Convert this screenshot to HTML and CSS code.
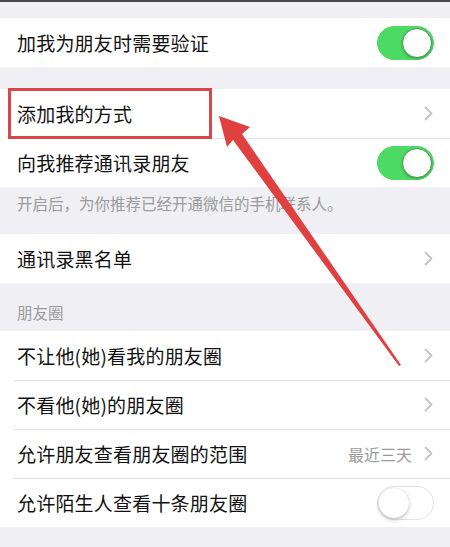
FILE: index.html
```html
<!DOCTYPE html>
<html lang="zh-CN">
<head>
    <meta charset="UTF-8">
    <meta name="viewport" content="width=device-width, initial-scale=1.0">
    <title>隐私</title>
    <link rel="stylesheet" href="styles.css">
</head>
<body>
    <div class="page">
        <div class="topline"></div>
        <div class="gap-top"></div>

        <div class="group">
            <div class="row">
                <span class="label">加我为朋友时需要验证</span>
                <span class="switch on"><span class="knob"></span></span>
            </div>
        </div>

        <div class="gap-mid"></div>

        <div class="group">
            <div class="row">
                <span class="label">添加我的方式</span>
                <svg class="chevron" viewBox="0 0 9 15"><polyline points="1.5,1.5 7.5,7.5 1.5,13.5"/></svg>
            </div>
            <div class="row">
                <span class="label">向我推荐通讯录朋友</span>
                <span class="switch on"><span class="knob"></span></span>
            </div>
        </div>

        <div class="footer-note">开启后，为你推荐已经开通微信的手机联系人。</div>

        <div class="group">
            <div class="row">
                <span class="label">通讯录黑名单</span>
                <svg class="chevron" viewBox="0 0 9 15"><polyline points="1.5,1.5 7.5,7.5 1.5,13.5"/></svg>
            </div>
        </div>

        <div class="section-title">朋友圈</div>

        <div class="group">
            <div class="row">
                <span class="label">不让他(她)看我的朋友圈</span>
                <svg class="chevron" viewBox="0 0 9 15"><polyline points="1.5,1.5 7.5,7.5 1.5,13.5"/></svg>
            </div>
            <div class="row">
                <span class="label">不看他(她)的朋友圈</span>
                <svg class="chevron" viewBox="0 0 9 15"><polyline points="1.5,1.5 7.5,7.5 1.5,13.5"/></svg>
            </div>
            <div class="row">
                <span class="label">允许朋友查看朋友圈的范围</span>
                <span class="value">最近三天</span>
                <svg class="chevron" viewBox="0 0 9 15"><polyline points="1.5,1.5 7.5,7.5 1.5,13.5"/></svg>
            </div>
            <div class="row">
                <span class="label">允许陌生人查看十条朋友圈</span>
                <span class="switch"><span class="knob"></span></span>
            </div>
        </div>

        <!-- annotation drawn over the screenshot -->
        <svg class="annotation" viewBox="0 0 450 547">
            <rect class="mark-box" x="9.5" y="89.5" width="201" height="48"/>
            <polygon class="mark-arrow" points="219,116 250,127 242,134 401,365 399,366 233,140 227,147"/>
        </svg>
    </div>
</body>
</html>
```

FILE: styles.css
```css
:root {
    --bg: #efeff4;
    --text: #111;
    --muted: #9b9b9b;
    --line: #e2e2e6;
    --green: #4cd964;
    --red: #e0403f;
}

body {
    margin: 0;
    background-color: var(--bg);
    font-family: "Noto Sans CJK SC", "Noto Sans", sans-serif;
    color: var(--text);
}

.page {
    position: relative;
    width: 450px;
    height: 547px;
    overflow: hidden;
}

.topline {
    height: 2px;
    background: #4a4a4a;
}

.gap-top {
    height: 16px;
}

.gap-mid {
    height: 22px;
}

.group {
    background: white;
}

.row {
    display: flex;
    align-items: center;
    height: 49px;
    box-sizing: border-box;
    padding: 0 16px 0 17px;
    position: relative;
}

.row + .row::before {
    content: "";
    position: absolute;
    top: 0;
    left: 14px;
    right: 0;
    height: 1px;
    background: var(--line);
}

.label {
    flex: 1;
    font-size: 19px;
    line-height: 1;
    letter-spacing: 0.2px;
}

.value {
    font-size: 16px;
    color: var(--muted);
    margin-right: 12px;
}

.chevron {
    width: 9px;
    height: 15px;
    margin-right: 1px;
}

.chevron polyline {
    fill: none;
    stroke: #c4c4c9;
    stroke-width: 1.8;
    stroke-linecap: round;
    stroke-linejoin: round;
}

.switch {
    width: 57px;
    height: 34px;
    border-radius: 17px;
    box-sizing: border-box;
    background: white;
    border: 1.5px solid #e3e3e6;
    position: relative;
    display: flex;
    align-items: center;
    padding: 0 1px;
}

.switch.on {
    background: var(--green);
    border-color: var(--green);
    justify-content: flex-end;
}

.knob {
    width: 30px;
    height: 30px;
    border-radius: 50%;
    background: white;
    box-shadow: 0 2px 4px rgba(0,0,0,0.22), 0 0 1px rgba(0,0,0,0.2);
}

.switch.on .knob {
    box-shadow: 0 1px 2px rgba(0,0,0,0.25);
    border: 1px solid #3e9a4e;
    box-sizing: border-box;
}

.footer-note {
    height: 47px;
    box-sizing: border-box;
    padding: 1px 17px 0;
    font-size: 15.5px;
    line-height: 30px;
    color: var(--muted);
}

.section-title {
    height: 48px;
    box-sizing: border-box;
    padding: 17px 17px 0;
    font-size: 15.5px;
    line-height: 24px;
    color: var(--muted);
}

.annotation {
    position: absolute;
    left: 0;
    top: 0;
    width: 450px;
    height: 547px;
    pointer-events: none;
}

.mark-box {
    fill: none;
    stroke: #d9464b;
    stroke-width: 3;
}

.mark-arrow {
    fill: var(--red);
}
```
